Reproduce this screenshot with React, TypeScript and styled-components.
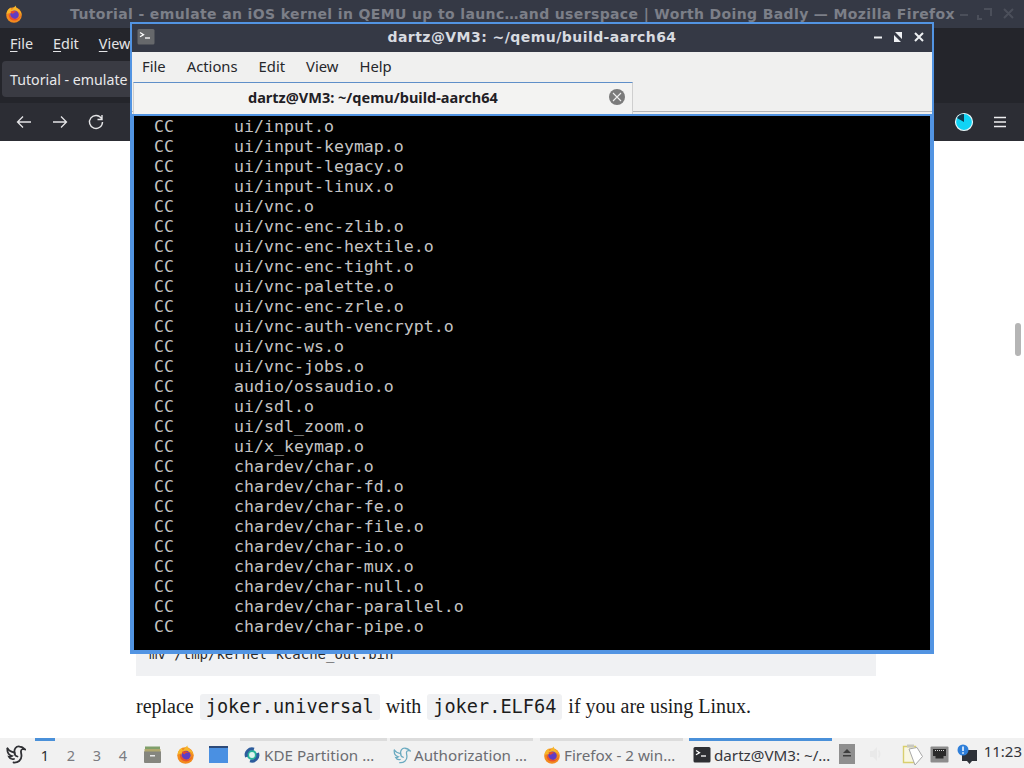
import React from "react";
import styled, { createGlobalStyle } from "styled-components";

const Global = createGlobalStyle`
  html, body { margin: 0; padding: 0; width: 1024px; height: 768px; overflow: hidden; background: #fff; }
  #root { width: 1024px; height: 768px; }
`;
const Desktop = styled.div`
  position: relative; width: 1024px; height: 768px; overflow: hidden;
  display: flex; flex-direction: column; font-family: "Noto Sans", "Open Sans", sans-serif;
`;
const Browser = styled.div`flex: 1; min-height: 0; display: flex; flex-direction: column; background: #fff;`;
const BrowserTitle = styled.div`
  height: 28px; flex: none; background: #353945; position: relative; display: flex; align-items: center;
  padding: 0 0 0 70px; box-sizing: border-box; color: #7c7f88; white-space: nowrap;
  font: bold 14px "DejaVu Sans", sans-serif; letter-spacing: 0.37px;
`;
const FoxSlot = styled.div`position: absolute; left: 5px; top: 5px; width: 18px; height: 18px;`;
const BrowserButtons = styled.div`position: absolute; right: 6px; top: 7px; display: flex; gap: 11px; opacity: .25;`;
const BrowserMenu = styled.div`
  height: 33px; flex: none; background: #24252b; display: flex; align-items: center; gap: 20px; padding: 0 0 3px 10px; box-sizing: border-box;
  color: #e3e4e6; font-size: 14.4px;
`;
const Mnemonic = styled.span`text-decoration: underline; text-underline-offset: 2px;`;
const TabStrip = styled.div`height: 42px; flex: none; background: #24252b; padding: 0 0 0 2px; box-sizing: border-box;`;
const BrowserTab = styled.div`
  width: 200px; height: 36px; background: #3a3b43; border-radius: 4px; color: #e8e8ea; font-size: 14.2px;
  display: flex; align-items: center; padding-left: 8px; box-sizing: border-box; white-space: nowrap;
`;
const NavBar = styled.div`
  height: 38px; flex: none; background: #2c2d34; display: flex; align-items: center; padding: 0 17px 0 16px; position: relative;
`;
const NavIcons = styled.div`display: flex; gap: 20px; align-items: center;`;
const NavRight = styled.div`margin-left: auto; display: flex; gap: 19px; align-items: center;`;
const Page = styled.div`flex: 1; min-height: 0; background: #fff; position: relative; padding: 505px 148px 0 136px; box-sizing: border-box;`;
const CodeBlock = styled.pre`
  margin: 0; height: 30px; background: #f0f1f3; padding: 0 13px; box-sizing: border-box;
  font: 14px/16px "DejaVu Sans Mono", monospace; color: #2b2b2b;
`;
const Para = styled.p`
  margin: 15px 0 0; font: 20px/30px "Liberation Serif", serif; color: #1c1c1c; white-space: nowrap;
`;
const InlineCode = styled.code`
  font: 18.6px "DejaVu Sans Mono", monospace; background: #f0f1f3; border-radius: 3px; padding: 2px 6px 3px; margin: 0 1px;
`;
const ScrollThumb = styled.div`position: absolute; left: 1015px; top: 182px; width: 6px; height: 33px; border-radius: 3px; background: #b5b5b5;`;

const Terminal = styled.div`
  position: absolute; left: 130px; top: 22px; width: 804px; height: 632px; box-sizing: border-box;
  border: 2px solid #5294e2; display: flex; flex-direction: column; background: #f0f0ef;
`;
const TermTitle = styled.div`
  height: 28px; flex: none; box-sizing: border-box; padding-bottom: 2px; background: #353945; color: #d8dbe0; position: relative;
  display: flex; align-items: center; justify-content: center;
  font: bold 14px "DejaVu Sans", sans-serif; letter-spacing: .45px;
`;
const TermLogo = styled.div`position: absolute; left: 5px; top: 4px; width: 18px; height: 18px;`;
const WindowButtons = styled.div`position: absolute; right: 8px; top: 7px; display: flex; gap: 12px; align-items: center;`;
const TermMenu = styled.div`
  height: 30px; flex: none; box-sizing: border-box; padding: 0 0 2px 10px; background: #f0f0ef; display: flex; align-items: center; gap: 21px;
  color: #26272b; font-size: 14.8px;
`;
const TermTabs = styled.div`
  height: 32px; flex: none; display: flex; align-items: flex-start;
  background: linear-gradient(#f0f0ef 0 29px, #b4b5b8 29px 30px, #f0f0ef 30px);
`;
const TermTab = styled.div`
  width: 500px; height: 32px; margin: 0 0 0 1px; background: #f3f3f2; box-sizing: border-box;
  border-top: 1.5px solid #5f8fc9; border-right: 1px solid #cfcfcf; border-left: 1px solid #cfcfcf;
  display: flex; align-items: center; position: relative; color: #1f2025; font-weight: 700; font-size: 14.5px;
  padding: 0 0 3px 114px; white-space: nowrap;
`;
const CloseTab = styled.div`position: absolute; right: 7px; top: 6px; width: 16px; height: 16px;`;
const Divider = styled.div`height: 2px; flex: none; background: #5294e2;`;
const TermBody = styled.div`
  flex: 1; min-height: 0; background: #000; padding: 1px 0 0 20px; overflow: hidden; color: #c4c4c4;
  border: 2px solid #5294e2; border-top: 0;
  font: 16.6px/20px "DejaVu Sans Mono", monospace;
`;
const TermRow = styled.div`display: flex; height: 20px; white-space: pre;`;
const Cmd = styled.span`width: 80px; flex: none;`;

const Taskbar = styled.div`
  height: 30px; flex: none; background: #f1f1f1; display: flex; align-items: stretch; position: relative;
  color: #55565b; font-size: 15.2px;
`;
const StartSlot = styled.div`width: 32px; flex: none; display: flex; align-items: center; justify-content: center; padding-top: 1px;`;
const Desk = styled.div<{ $on?: boolean }>`
  width: 20px; margin: 0 3px; flex: none; display: flex; align-items: center; justify-content: center; box-sizing: border-box;
  color: ${p => (p.$on ? "#2b2c30" : "#7a7b80")}; font-size: 14.5px;
  border-top: 3px solid ${p => (p.$on ? "#4a90d9" : "transparent")};
`;
const Launcher = styled.div`width: 33px; flex: none; display: flex; align-items: center; justify-content: center; padding-top: 2px;`;
const Tasks = styled.div`display: flex; margin-left: 5px;`;
const Task = styled.div<{ $w: number; $gap: number; $pad?: number; $on?: boolean }>`
  width: ${p => p.$w}px; flex: none; display: flex; align-items: center; gap: 3px; box-sizing: border-box;
  padding: 0 0 0 ${p => p.$pad ?? 3}px; margin-right: ${p => p.$gap}px;
  border-top: 3px solid ${p => (p.$on ? "#4a90d9" : "#dcdcdc")}; white-space: nowrap;
  color: ${p => (p.$on ? "#36373c" : "#6c6d72")};
`;
const Tray = styled.div`margin-left: auto; display: flex; align-items: center; padding: 2px 2px 0 0;`;
const TrayItem = styled.div<{ $gap: number }>`display: flex; margin-right: ${p => p.$gap}px;`;
const Clock = styled.div`color: #33343a; font-size: 15px; padding-bottom: 6px;`;

const Fox = ({ s = 18 }: { s?: number }) => (
  <svg width={s} height={s} viewBox="0 0 18 18">
    <circle cx="9" cy="10" r="7.800" fill="#f28a1e" />
    <path d="M1.500 9C2 5 4 3 6 2.500 5.500 4 6 5 7 5c1-2 3-4 4-4.500-.5 1.500.5 2.500 2 3.500 2 1.500 3.500 3.500 3.500 6-1-2-2-3-3.500-3.500L5 8z" fill="#f6b62a" />
    <circle cx="9.500" cy="9.800" r="4.300" fill="#5f3dc4" />
    <path d="M5.500 6.500C8 5.500 11 6 12.500 7.500 10.500 7 8.500 7.500 8 9 7 8.500 6 8 5.500 6.500z" fill="#e64a2a" />
    <path d="M4 8c-1 4 1 7 5 7.500 3 .3 6-2 7-5-2 3-5 4-7.500 3C6 12.500 5 10.500 4 8z" fill="#e9522c" />
  </svg>
);
const Prompt = ({ s = 18, bg = "#66686b" }: { s?: number; bg?: string }) => (
  <svg width={s} height={s} viewBox="0 0 18 18">
    <rect x="0.500" y="1" width="17" height="15.500" rx="1.500" fill={bg} />
    <path d="M3 4.500l3.500 2.200L3 8.800" fill="none" stroke="#fff" strokeWidth="1.300" />
    <path d="M8 10h5" stroke="#fff" strokeWidth="1.300" />
  </svg>
);
const Bird = ({ c = "#2f3034", s = 20, w = 1.800 }: { c?: string; s?: number; w?: number }) => (
  <svg width={s} height={s} viewBox="0 0 20 20" fill="none" stroke={c} strokeWidth={w} strokeLinecap="round">
    <path d="M1.500 4.500C3 7 5.500 8 8.500 8.500 8 5 10 2 13.500 2.500c2 .2 4 1.300 5.500 2.800-2-.5-3.800-.2-4 1.700-.2 1.500.5 3 .5 5 0 4-3.500 7-8 6.500" />
    <path d="M1.500 4.500C1 8 2.500 11 6 12c-1 .8-2 1-3 .8 1 2 3 2.700 5 2.200" />
    <path d="M8.500 8.500c0 2 1 3.500 3 4" />
  </svg>
);

const lines: string[] = [
  "ui/input.o", "ui/input-keymap.o", "ui/input-legacy.o", "ui/input-linux.o", "ui/vnc.o", "ui/vnc-enc-zlib.o",
  "ui/vnc-enc-hextile.o", "ui/vnc-enc-tight.o", "ui/vnc-palette.o", "ui/vnc-enc-zrle.o", "ui/vnc-auth-vencrypt.o",
  "ui/vnc-ws.o", "ui/vnc-jobs.o", "audio/ossaudio.o", "ui/sdl.o", "ui/sdl_zoom.o", "ui/x_keymap.o", "chardev/char.o",
  "chardev/char-fd.o", "chardev/char-fe.o", "chardev/char-file.o", "chardev/char-io.o", "chardev/char-mux.o",
  "chardev/char-null.o", "chardev/char-parallel.o", "chardev/char-pipe.o",
];

export default function App() {
  return (
    <Desktop>
      <Global />
      <Browser>
        <BrowserTitle>
          <FoxSlot><Fox /></FoxSlot>
          Tutorial - emulate an iOS kernel in QEMU up to launc…and userspace | Worth Doing Badly — Mozilla Firefox
          <BrowserButtons>
            <svg width="60" height="14" viewBox="0 0 60 14" stroke="#8d9098" strokeWidth="2" fill="none">
              <path d="M2 8h8M26 2l7 0 0 7M24 12l-4 0 0-4M46 2l9 9M55 2l-9 9" />
            </svg>
          </BrowserButtons>
        </BrowserTitle>
        <BrowserMenu>
          <span><Mnemonic>F</Mnemonic>ile</span>
          <span><Mnemonic>E</Mnemonic>dit</span>
          <span><Mnemonic>V</Mnemonic>iew</span>
        </BrowserMenu>
        <TabStrip>
          <BrowserTab>Tutorial - emulate</BrowserTab>
        </TabStrip>
        <NavBar>
          <NavIcons>
            <svg width="16" height="16" viewBox="0 0 16 16" fill="none" stroke="#e4e4e6" strokeWidth="1.300"><path d="M15 8H1.500M7 2.500L1.500 8 7 13.500" /></svg>
            <svg width="16" height="16" viewBox="0 0 16 16" fill="none" stroke="#e4e4e6" strokeWidth="1.300"><path d="M1 8h13.500M9 2.500L14.500 8 9 13.500" /></svg>
            <svg width="16" height="16" viewBox="0 0 16 16" fill="none" stroke="#e4e4e6" strokeWidth="1.400"><path d="M13.500 4.500A6.500 6.500 0 1 0 14.500 8M14 1v4.500H9.500" /></svg>
          </NavIcons>
          <NavRight>
            <svg width="20" height="20" viewBox="0 0 20 20">
              <circle cx="10" cy="10" r="8.500" fill="#10d3f5" stroke="#e8f4f6" strokeWidth="1.200" />
              <path d="M10 10V2A8 8 0 0 0 3 6z" fill="#0f3b4f" />
            </svg>
            <svg width="14" height="14" viewBox="0 0 14 14" stroke="#eeeef0" strokeWidth="1.300"><path d="M1 2.500h12M1 7h12M1 11.500h12" /></svg>
          </NavRight>
        </NavBar>
        <Page>
          <CodeBlock>mv /tmp/kernel kcache_out.bin</CodeBlock>
          <Para>
            replace <InlineCode>joker.universal</InlineCode> with <InlineCode>joker.ELF64</InlineCode> if you are using Linux.
          </Para>
          <ScrollThumb />
        </Page>
      </Browser>
      <Taskbar>
        <StartSlot><Bird /></StartSlot>
        <Desk $on>1</Desk>
        <Desk>2</Desk>
        <Desk>3</Desk>
        <Desk>4</Desk>
        <Launcher>
          <svg width="19" height="19" viewBox="0 0 19 19">
            <rect x="1" y="6" width="17" height="12" rx="1" fill="#85867f" />
            <rect x="2" y="1.500" width="15" height="3" fill="#7f9f6a" />
            <rect x="1.500" y="4" width="16" height="2.500" fill="#b0a76e" />
            <rect x="7" y="10" width="5" height="1.500" fill="#e8e8e8" />
          </svg>
        </Launcher>
        <Launcher><Fox s={19} /></Launcher>
        <Launcher>
          <svg width="19" height="17" viewBox="0 0 19 17">
            <rect width="19" height="17" fill="#2d4a78" />
            <rect x="0" y="2" width="19" height="15" fill="#4a90e2" />
          </svg>
        </Launcher>
        <Tasks>
          <Task $w={147} $gap={3}>
            <svg width="18" height="18" viewBox="0 0 18 18" fill="none">
              <circle cx="9" cy="9" r="4" fill="#dff5ee" stroke="#27b59a" strokeWidth="2.200" />
              <path d="M3.500 11A6 6 0 0 1 11 3.200" stroke="#2d5c9c" strokeWidth="3" />
              <path d="M14.500 7A6 6 0 0 1 7 14.800" stroke="#2d5c9c" strokeWidth="3" />
            </svg>
            KDE Partition …
          </Task>
          <Task $w={143} $gap={7}>
            <Bird c="#6aaac0" s={18} w={1.400} />
            Authorization …
          </Task>
          <Task $w={143} $gap={6}>
            <Fox s={18} />
            Firefox - 2 win…
          </Task>
          <Task $w={143} $gap={0} $pad={4} $on>
            <Prompt s={18} bg="#2e2f33" />
            dartz@VM3: ~/…
          </Task>
        </Tasks>
        <Tray>
          <TrayItem $gap={14}>
            <svg width="16" height="20" viewBox="0 0 16 20"><rect width="16" height="20" fill="#8f8f8f" /><path d="M4 9l4-4 4 4zM4 11h8v1.500H4z" fill="#3e3e3e" /></svg>
          </TrayItem>
          <TrayItem $gap={19}>
            <svg width="14" height="16" viewBox="0 0 14 16" fill="#e9e9e9"><path d="M1 5h3l4-4v14l-4-4H1zM10 4c2 2 2 6 0 8l-1-1c1-2 1-4 0-6z" /></svg>
          </TrayItem>
          <TrayItem $gap={6}>
            <svg width="22" height="23" viewBox="0 0 22 23">
              <path d="M1.500 3.500h12v16h-12z" fill="#f9f7e2" stroke="#d9cf6e" strokeWidth="1.400" />
              <path d="M7 6l8-1.500 5.500 9L13 22z" fill="#fff" stroke="#a8a8a8" />
              <path d="M5 1.500h7v3H5z" fill="#c8c8c0" />
            </svg>
          </TrayItem>
          <TrayItem $gap={8}>
            <svg width="19" height="17" viewBox="0 0 19 17"><rect x="0.500" y="0.500" width="18" height="16" rx="1" fill="#8c8c8c" /><path d="M3 3h13v7h-2.500v2.500h-8V10H3z" fill="#2a2a2a" /><path d="M5 4.500h9" stroke="#d8d8d8" strokeDasharray="1 1" /></svg>
          </TrayItem>
          <TrayItem $gap={7}>
            <svg width="20" height="20" viewBox="0 0 20 20"><rect x="5" y="6" width="15" height="11" fill="#2e3238" /><path d="M10 17h5l-2.500 3z" fill="#2e3238" /><circle cx="6" cy="6" r="5.500" fill="#2f7fd9" /><path d="M6 2.500v4.500M6 8.200v1.500" stroke="#fff" strokeWidth="1.500" /></svg>
          </TrayItem>
          <Clock>11:23</Clock>
        </Tray>
      </Taskbar>
      <Terminal>
        <TermTitle>
          <TermLogo><Prompt s={18} /></TermLogo>
          dartz@VM3: ~/qemu/build-aarch64
          <WindowButtons>
            <svg width="52" height="12" viewBox="0 0 52 12" stroke="#eef0f3" strokeWidth="2" fill="none">
              <path d="M2 6.500h8" />
              <path d="M23 1h7v7zM22 4v7h7z" fill="#eef0f3" stroke="none" />
              <path d="M43 2l8 8M51 2l-8 8" />
            </svg>
          </WindowButtons>
        </TermTitle>
        <TermMenu>
          <span>File</span><span>Actions</span><span>Edit</span><span>View</span><span>Help</span>
        </TermMenu>
        <TermTabs>
          <TermTab>
            dartz@VM3: ~/qemu/build-aarch64
            <CloseTab>
              <svg width="16" height="16" viewBox="0 0 16 16">
                <circle cx="8" cy="8" r="8" fill="#7b7b7b" />
                <path d="M4 4l8 8M12 4l-8 8" stroke="#eee" strokeWidth="1.100" />
              </svg>
            </CloseTab>
          </TermTab>
        </TermTabs>
        <Divider />
        <TermBody>
          {lines.map(l => (
            <TermRow key={l}><Cmd>CC</Cmd>{l}</TermRow>
          ))}
        </TermBody>
      </Terminal>
    </Desktop>
  );
}
